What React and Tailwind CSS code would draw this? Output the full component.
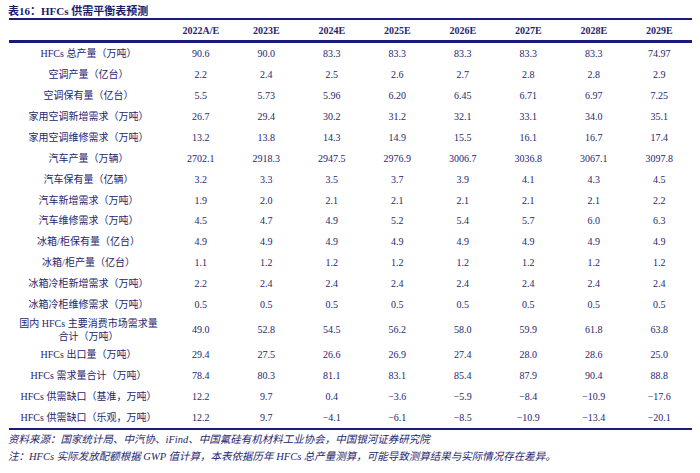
import React from "react";

const years = ["2022A/E", "2023E", "2024E", "2025E", "2026E", "2027E", "2028E", "2029E"];

const rows = [
  ["HFCs 总产量（万吨）", "90.6", "90.0", "83.3", "83.3", "83.3", "83.3", "83.3", "74.97"],
  ["空调产量（亿台）", "2.2", "2.4", "2.5", "2.6", "2.7", "2.8", "2.8", "2.9"],
  ["空调保有量（亿台）", "5.5", "5.73", "5.96", "6.20", "6.45", "6.71", "6.97", "7.25"],
  ["家用空调新增需求（万吨）", "26.7", "29.4", "30.2", "31.2", "32.1", "33.1", "34.0", "35.1"],
  ["家用空调维修需求（万吨）", "13.2", "13.8", "14.3", "14.9", "15.5", "16.1", "16.7", "17.4"],
  ["汽车产量（万辆）", "2702.1", "2918.3", "2947.5", "2976.9", "3006.7", "3036.8", "3067.1", "3097.8"],
  ["汽车保有量（亿辆）", "3.2", "3.3", "3.5", "3.7", "3.9", "4.1", "4.3", "4.5"],
  ["汽车新增需求（万吨）", "1.9", "2.0", "2.1", "2.1", "2.1", "2.1", "2.1", "2.2"],
  ["汽车维修需求（万吨）", "4.5", "4.7", "4.9", "5.2", "5.4", "5.7", "6.0", "6.3"],
  ["冰箱/柜保有量（亿台）", "4.9", "4.9", "4.9", "4.9", "4.9", "4.9", "4.9", "4.9"],
  ["冰箱/柜产量（亿台）", "1.1", "1.2", "1.2", "1.2", "1.2", "1.2", "1.2", "1.2"],
  ["冰箱冷柜新增需求（万吨）", "2.2", "2.4", "2.4", "2.4", "2.4", "2.4", "2.4", "2.4"],
  ["冰箱冷柜维修需求（万吨）", "0.5", "0.5", "0.5", "0.5", "0.5", "0.5", "0.5", "0.5"],
  ["国内 HFCs 主要消费市场需求量|合计（万吨）", "49.0", "52.8", "54.5", "56.2", "58.0", "59.9", "61.8", "63.8"],
  ["HFCs 出口量（万吨）", "29.4", "27.5", "26.6", "26.9", "27.4", "28.0", "28.6", "25.0"],
  ["HFCs 需求量合计（万吨）", "78.4", "80.3", "81.1", "83.1", "85.4", "87.9", "90.4", "88.8"],
  ["HFCs 供需缺口（基准，万吨）", "12.2", "9.7", "0.4", "−3.6", "−5.9", "−8.4", "−10.9", "−17.6"],
  ["HFCs 供需缺口（乐观，万吨）", "12.2", "9.7", "−4.1", "−6.1", "−8.5", "−10.9", "−13.4", "−20.1"],
];

export default function App() {
  return (
    <div
      className="w-[700px] h-[473px] bg-white text-[#26266e] overflow-hidden"
      style={{ fontFamily: '"Liberation Serif", "Noto Sans CJK SC", serif' }}
    >
      {/* title */}
      <div className="pl-[8px] pt-[4px] h-[18px] text-[11px] leading-[14px] font-bold text-[#1c1c66]">
        表16：HFCs 供需平衡表预测
      </div>

      <div className="ml-[9px] w-[683px]">
        {/* header */}
        <div className="grid grid-cols-[159px_repeat(8,1fr)] h-[25px] items-center border-t-2 border-b-[3px] border-[#1a1a78] text-[10px] font-bold">
          <div />
          {years.map((y) => (
            <div key={y} className="text-center">
              {y}
            </div>
          ))}
        </div>

        {/* body */}
        <div className="border-b-2 border-[#1a1a78] text-[10px]">
          {rows.map((r) => {
            const double = r[0].includes("|");
            return (
              <div
                key={r[0]}
                className={
                  "grid grid-cols-[159px_repeat(8,1fr)] items-center " +
                  (double ? "h-[29px]" : "h-[20.95px]")
                }
              >
                <div className="text-center leading-[13px]">
                  {double
                    ? r[0].split("|").map((t) => <div key={t}>{t}</div>)
                    : r[0]}
                </div>
                {r.slice(1).map((v, i) => (
                  <div key={i} className="text-center">
                    {v}
                  </div>
                ))}
              </div>
            );
          })}
        </div>
      </div>

      {/* source */}
      <div className="pl-[8px] pt-[1px] text-[10.5px] leading-[17px] italic text-[#26266e]">
        <div>资料来源：国家统计局、中汽协、iFind、中国氟硅有机材料工业协会，中国银河证券研究院</div>
        <div>注：HFCs 实际发放配额根据 GWP 值计算，本表依据历年 HFCs 总产量测算，可能导致测算结果与实际情况存在差异。</div>
      </div>
    </div>
  );
}
